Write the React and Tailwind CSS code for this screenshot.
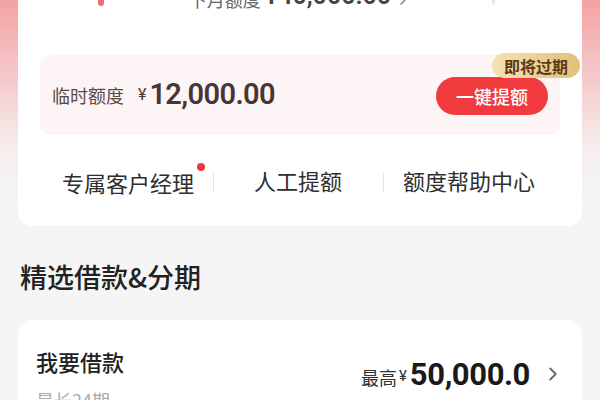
import { ChevronRight } from 'lucide-react';

const cjk = { fontFamily: '"Noto Sans CJK SC", "Noto Sans", sans-serif' };
const num = { fontFamily: 'Roboto, "Liberation Sans", sans-serif' };

function LinkItem({ children, dot = false }) {
  return (
    <span className="relative text-[22px] leading-none text-[#2e2e2e]">
      {children}
      {dot && <span className="absolute -right-[11px] -top-[8px] w-[8px] h-[8px] rounded-full bg-[#f0353d]" />}
    </span>
  );
}

export default function App() {
  return (
    <div
      className="w-[600px] h-[400px] overflow-hidden bg-[linear-gradient(180deg,#f3a2a3_0px,#f6eeee_150px,#f5f5f5_200px)]"
      style={cjk}
    >
      <div className="mx-[18px] h-[226px] bg-white rounded-b-[14px] flex flex-col">
        {/* next month limit, clipped at the top edge */}
        <div className="relative h-[10px] overflow-hidden">
          <span className="absolute left-[80px] top-0 w-[6px] h-[6px] rounded-b-full bg-[#f06b78]" />
          <span className="absolute left-[474px] top-0 w-[3px] h-[5px] rounded-b-full bg-[#e8e8e8]" />
          <div className="absolute left-0 right-0 bottom-[2px] flex items-end justify-center gap-[4px] text-[#666] leading-none">
            <span className="text-[18px]">下月额度</span>
            <span className="text-[25px] font-semibold text-[#444]" style={num}>¥40,000.00</span>
            <ChevronRight size={16} strokeWidth={2} className="text-[#777]" />
          </div>
        </div>

        <div className="relative mt-[45px] mx-[22px] h-[80px] rounded-[12px] bg-[#fdf5f5] flex items-center justify-between pl-[12px] pr-[12px]">
          <div className="flex items-center">
            <span className="text-[18px] text-[#5b4848]">临时额度</span>
            <span className="ml-[14px] text-[16px] text-[#4a3636]" style={num}>¥</span>
            <span className="ml-[3px] text-[29px] font-semibold tracking-[-0.6px] text-[#4a3535]" style={num}>12,000.00</span>
          </div>
          <button className="mt-[2px] w-[112px] h-[38px] rounded-full bg-[#f03a3e] text-white text-[18px] font-medium flex items-center justify-center">
            一键提额
          </button>
          <span className="absolute -right-[20px] -top-[2px] w-[88px] h-[25px] rounded-full bg-[linear-gradient(90deg,#f5e2b6,#e3bf7c)] text-[#5c3b12] text-[16px] font-semibold flex items-center justify-center">
            即将过期
          </span>
        </div>

        <div className="mt-[34px] flex items-center pl-[44px]">
          <LinkItem dot>专属客户经理</LinkItem>
          <span className="ml-[19px] w-px h-[20px] bg-[#e6e6e6]" />
          <span className="ml-[40px]"><LinkItem>人工提额</LinkItem></span>
          <span className="ml-[41px] w-px h-[20px] bg-[#e6e6e6]" />
          <span className="ml-[19px]"><LinkItem>额度帮助中心</LinkItem></span>
        </div>
      </div>

      <h2 className="mt-[33px] ml-[20px] text-[27px] leading-[36px] font-medium text-[#222]">精选借款&amp;分期</h2>

      <div className="mt-[25px] mx-[18px] h-[120px] bg-white rounded-[14px] flex justify-between pl-[18px] pr-[18px]">
        <div className="pt-[26px] flex flex-col">
          <span className="text-[22px] leading-[30px] font-medium text-[#222]">我要借款</span>
          <span className="mt-[12px] text-[18px] leading-[24px] text-[#aaa]">最长24期</span>
        </div>
        <div className="pt-[34px] flex items-center self-start h-[74px]">
          <span className="text-[18px] leading-none text-[#333] mt-[6px]">最高</span>
          <span className="ml-[2px] text-[15px] leading-none text-[#333] mt-[4px]" style={num}>¥</span>
          <span className="ml-[3px] text-[31px] leading-none font-bold tracking-[-0.4px] text-[#1a1a1a]" style={num}>50,000.0</span>
          <ChevronRight size={22} strokeWidth={2} className="ml-[12px] text-[#666]" />
        </div>
      </div>
    </div>
  );
}
